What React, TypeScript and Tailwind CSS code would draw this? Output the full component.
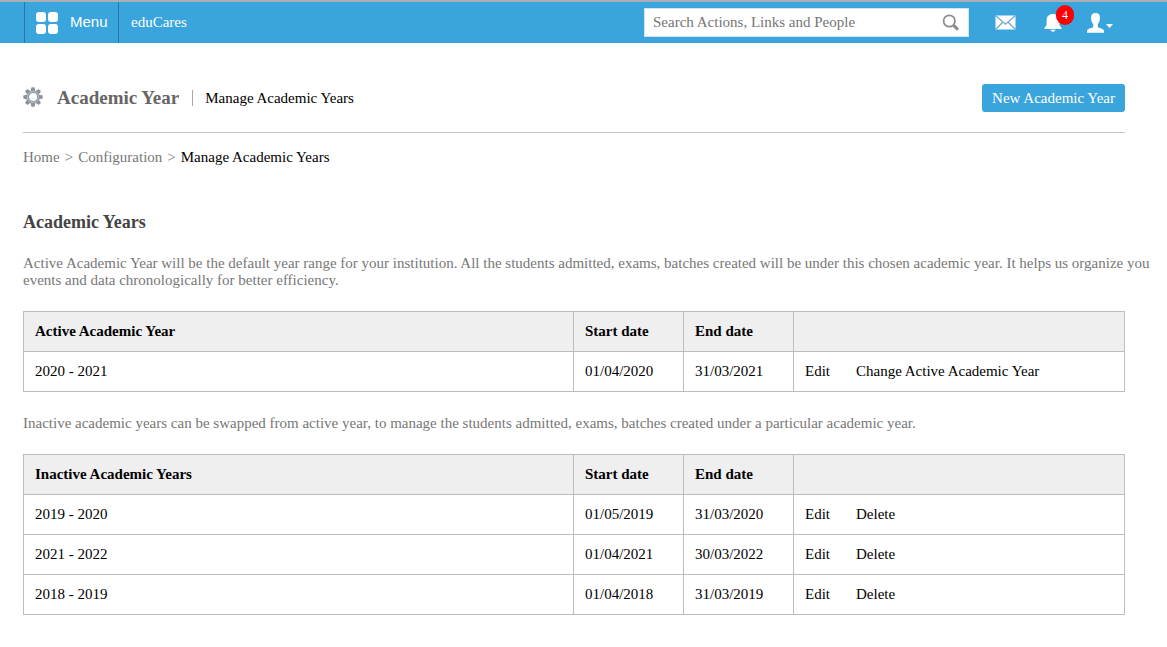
import type { ReactNode } from "react";

type Year = { name: string; start: string; end: string };

const activeYears: Year[] = [
  { name: "2020 - 2021", start: "01/04/2020", end: "31/03/2021" },
];

const inactiveYears: Year[] = [
  { name: "2019 - 2020", start: "01/05/2019", end: "31/03/2020" },
  { name: "2021 - 2022", start: "01/04/2021", end: "30/03/2022" },
  { name: "2018 - 2019", start: "01/04/2018", end: "31/03/2019" },
];

function Cell({ children }: { children?: ReactNode }) {
  return <td className="border border-[#bdbdbd] px-[11px]">{children}</td>;
}

function YearTable({ title, years, action }: { title: string; years: Year[]; action: string }) {
  const head = "border border-[#bdbdbd] px-[11px] text-left font-bold";
  return (
    <table className="w-full table-fixed border-collapse text-black">
      <colgroup>
        <col />
        <col className="w-[110px]" />
        <col className="w-[110px]" />
        <col className="w-[331px]" />
      </colgroup>
      <thead>
        <tr className="h-10 bg-[#efefef]">
          <th scope="col" className={head}>{title}</th>
          <th scope="col" className={head}>Start date</th>
          <th scope="col" className={head}>End date</th>
          <td className={head} />
        </tr>
      </thead>
      <tbody>
        {years.map((year) => (
          <tr key={year.name} className="h-10">
            <Cell>{year.name}</Cell>
            <Cell>{year.start}</Cell>
            <Cell>{year.end}</Cell>
            <Cell>
              <a href="#edit" className="mr-[26px]">Edit</a>
              <a href="#action">{action}</a>
            </Cell>
          </tr>
        ))}
      </tbody>
    </table>
  );
}

function GearIcon() {
  return (
    <svg viewBox="0 0 20 20" className="mb-[2px] h-5 w-5" aria-hidden="true">
      <g fill="#8d939d">
        {[0, 45, 90, 135, 180, 225, 270, 315].map((angle) => (
          <path key={angle} d="M7.8 4.5 8.2.9Q8.300.3 9 .3h2q.7 0 .8.600l.4 3.600z" transform={`rotate(${angle} 10 10)`} />
        ))}
      </g>
      <circle cx="10" cy="10" r="5.4" fill="#fff" stroke="#8d939d" strokeWidth="2.800" />
      <circle cx="10" cy="10" r="5.5" fill="none" stroke="#b3b9c4" strokeWidth="1.300" />
    </svg>
  );
}

function Header() {
  return (
    <header className="flex h-[43px] items-stretch border-t-2 border-[#a9b0b4] bg-[#3aa5dc] pl-6 text-white">
      <button
        type="button"
        className="flex w-[95px] items-center gap-[11px] border-x border-[#2579a7] pl-[10px] pb-[2px] font-['Liberation_Sans',Arial,sans-serif] text-[15px]"
      >
        <svg viewBox="0 0 24 24" className="mt-[2px] h-6 w-6" fill="#fff" aria-hidden="true">
          <rect x="1" y="1" width="10" height="10" rx="3" />
          <rect x="13" y="1" width="10" height="10" rx="3" />
          <rect x="1" y="13" width="10" height="10" rx="3" />
          <rect x="13" y="13" width="10" height="10" rx="3" />
        </svg>
        Menu
      </button>
      <a href="#educares" className="flex items-center pl-3">eduCares</a>
      <form role="search" className="mr-[26px] ml-auto flex w-[325px] items-center self-center border border-[#cfe6f2] bg-white">
        <input
          type="text"
          aria-label="Search Actions, Links and People"
          placeholder="Search Actions, Links and People"
          className="h-[27px] min-w-0 flex-1 px-2 text-[#444] outline-none placeholder:text-[#757575]"
        />
        <button type="button" aria-label="Search" className="px-2">
          <svg viewBox="0 0 18 18" className="h-[18px] w-[18px]" fill="none" stroke="#8c8c8c" aria-hidden="true">
            <circle cx="7.3" cy="7" r="5.7" strokeWidth="1.7" />
            <path d="m11.7 11.4 4.3 4.3" strokeWidth="3" />
          </svg>
        </button>
      </form>
      <div className="mr-[54px] flex items-center">
        <button type="button" aria-label="Messages" className="mr-7">
          <svg viewBox="0 0 21 15" className="h-[15px] w-[21px]" aria-hidden="true">
            <path d="M.5.5h20v14H.5z" fill="#fff" />
            <path d="m.5.5 10 8.7 10-8.7M.5 14.5l7.3-7.2M20.5 14.5l-7.3-7.2" fill="none" stroke="#6fa9ca" strokeWidth="1.3" />
          </svg>
        </button>
        <button type="button" aria-label="Notifications, 4 new" className="relative mr-[25px]">
          <svg viewBox="0 0 18 18" className="h-[18px] w-[18px]" fill="#fff" aria-hidden="true">
            <path d="M9 0C5 0 2.600 2.600 2.600 6v5L.5 14v1h17v-1l-2.100-3V6C15.400 2.600 13 0 9 0zM6.500 15.800h5c-.4 1.300-1.300 1.900-2.500 1.900s-2.100-.6-2.500-1.900z" />
          </svg>
          <span className="absolute -top-[9px] left-3 flex h-5 w-[18px] items-center justify-center rounded-full bg-[#f00] text-xs">
            4
          </span>
        </button>
        <button type="button" aria-label="Account" className="flex items-center gap-[2px]">
          <svg viewBox="0 0 17 20" className="h-5 w-[17px]" fill="#fff" aria-hidden="true">
            <path d="M8.5 0C5.300 0 4 1.900 4.100 4.500c0 3 .8 5.500 2.100 6.600v2.600C6 15.200.3 15 0 18v1.800h17V18c-.3-3-6-2.800-6.200-4.300v-2.600c1.300-1.100 2.100-3.600 2.100-6.600C13 1.900 11.700 0 8.500 0z" />
          </svg>
          <svg viewBox="0 0 7 4" className="mt-[6px] h-1 w-[7px]" fill="#fff" aria-hidden="true">
            <path d="M0 0h7L3.5 4z" />
          </svg>
        </button>
      </div>
    </header>
  );
}

export default function App() {
  return (
    <div className="min-h-screen bg-white font-['Liberation_Serif','Times_New_Roman',serif] text-[15px] leading-[17px] text-[#777]">
      <Header />
      <main className="pr-[42px] pb-8 pl-[23px]">
        <div className="flex items-center border-b border-[#c8c8c8] pt-[41px] pb-5">
          <GearIcon />
          <h1 className="ml-[14px] text-[19px] leading-5 font-bold text-[#666]">Academic Year</h1>
          <span className="ml-[13px] h-4 border-l border-[#aaa]" />
          <span className="ml-3 text-black">Manage Academic Years</span>
          <button type="button" className="ml-auto h-7 rounded-[3px] bg-[#3aa5dc] px-[10px] text-white">
            New Academic Year
          </button>
        </div>
        <nav aria-label="Breadcrumb" className="mt-4 flex gap-[5px]">
          <a href="#home">Home</a>
          <span>&gt;</span>
          <a href="#configuration">Configuration</a>
          <span>&gt;</span>
          <span aria-current="page" className="text-black">Manage Academic Years</span>
        </nav>
        <h2 className="mt-[46px] text-lg leading-5 font-bold text-[#444]">Academic Years</h2>
        <p className="-mr-7 mt-[23px] mb-[22px]">
          Active Academic Year will be the default year range for your institution. All the students admitted, exams,
          batches created will be under this chosen academic year. It helps us organize you events and data
          chronologically for better efficiency.
        </p>
        <YearTable title="Active Academic Year" years={activeYears} action="Change Active Academic Year" />
        <p className="mt-[23px] mb-[22px]">
          Inactive academic years can be swapped from active year, to manage the students admitted, exams, batches
          created under a particular academic year.
        </p>
        <YearTable title="Inactive Academic Years" years={inactiveYears} action="Delete" />
      </main>
    </div>
  );
}
